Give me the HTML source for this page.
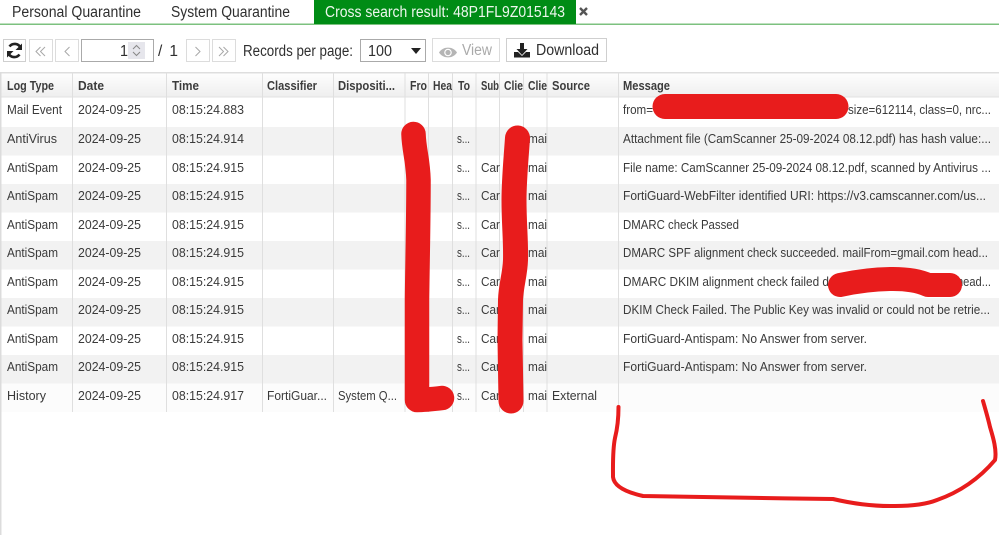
<!DOCTYPE html>
<html><head><meta charset="utf-8"><style>
html,body{margin:0;padding:0;background:#fff;width:999px;height:535px;overflow:hidden}
svg{display:block}
text{font-family:"Liberation Sans",sans-serif;font-size:12.5px;fill:#3a3a3a;white-space:pre}
.b{font-weight:bold;fill:#3c3c3c}
.t{font-size:15.5px;fill:#2f2f2f}
</style></head><body>
<svg width="999" height="535" viewBox="0 0 999 535" xmlns="http://www.w3.org/2000/svg">
<defs><linearGradient id="h" x1="0" y1="0" x2="0" y2="1"><stop offset="0" stop-color="#fff"/><stop offset="1" stop-color="#eeeeee"/></linearGradient></defs>
<rect width="999" height="535" fill="#fff"/>
<!-- tabs -->
<rect x="0" y="23.5" width="999" height="1.5" fill="#7cc17f"/>
<rect x="314" y="0" width="262" height="24" fill="#008c15"/>
<text class="t" x="12" y="17" textLength="129" lengthAdjust="spacingAndGlyphs">Personal Quarantine</text>
<text class="t" x="171" y="17" textLength="119" lengthAdjust="spacingAndGlyphs">System Quarantine</text>
<text class="t" x="325" y="17" textLength="240" lengthAdjust="spacingAndGlyphs" style="fill:#eef7ee">Cross search result: 48P1FL9Z015143</text>
<path d="M580 8l7 7M587 8l-7 7" stroke="#555" stroke-width="2.4"/>
<!-- toolbar -->
<g fill="#fff" stroke="#dcdcdc">
<rect x="3.5" y="39.5" width="22" height="22" stroke="#cfcfcf"/>
<rect x="29.5" y="39.5" width="23" height="22"/>
<rect x="55.5" y="39.5" width="23" height="22"/>
<rect x="186.5" y="39.5" width="23" height="22"/>
<rect x="212.5" y="39.5" width="23" height="22"/>
<rect x="81.5" y="39.5" width="72" height="22" stroke="#aaa"/>
<rect x="360.5" y="39.5" width="65" height="22" stroke="#aaa"/>
<rect x="432.5" y="38.5" width="67" height="23"/>
<rect x="506.5" y="38.5" width="100" height="23" stroke="#cfcfcf"/>
</g>
<path d="M20.500 47.500A6.500 6.500 0 0 0 9.500 46.500M8.500 53.500A6.500 6.500 0 0 0 19.500 54.500" fill="none" stroke="#222" stroke-width="2.6"/>
<path d="M22 43.500v6.500h-6.500zM7 57.500v-6.500h6.500z" fill="#222"/>
<g fill="none" stroke="#a8a8a8" stroke-width="1">
<path d="M40.500 47l-4.500 4.500 4.500 4.500M45 47l-4.500 4.500 4.500 4.500"/>
<path d="M69.500 47l-4.500 4.500 4.500 4.500"/>
<path d="M195.500 47l4.500 4.500-4.500 4.500"/>
<path d="M219 47l4.500 4.500-4.500 4.500M223.500 47l4.500 4.500-4.500 4.500"/>
</g>
<rect x="128" y="42" width="17" height="17" fill="#e6e6ec"/>
<path d="M133 49l3.500-3.500 3.500 3.500M133 52l3.500 3.500 3.500-3.500" fill="none" stroke="#888" stroke-width="1"/>
<text class="t" x="120" y="56" textLength="8" lengthAdjust="spacingAndGlyphs">1</text>
<text class="t" x="158" y="56" textLength="20" lengthAdjust="spacing">/ 1</text>
<text class="t" x="243" y="56" textLength="110" lengthAdjust="spacingAndGlyphs">Records per page:</text>
<text class="t" x="368" y="56" textLength="24" lengthAdjust="spacingAndGlyphs">100</text>
<path d="M411 48h10l-5 6z" fill="#222"/>
<path d="M439 52.500C443 46 453 46 457 52.500C453 59 443 59 439 52.500z" fill="#b5b5b5"/>
<circle cx="448" cy="52.500" r="3.800" fill="#fff"/><circle cx="448" cy="52.500" r="2.600" fill="#b5b5b5"/>
<text class="t" x="462" y="55" textLength="30" lengthAdjust="spacingAndGlyphs" style="fill:#aaa">View</text>
<path d="M520 43h4v6h3.500l-5.500 6-5.500-6h3.500z" fill="#222"/>
<path d="M514 52h4l4 4 4-4h4v5.500h-16z" fill="#222"/>
<text class="t" x="536" y="55" textLength="63" lengthAdjust="spacingAndGlyphs">Download</text>
<!-- table backgrounds -->
<rect x="1" y="72" width="998" height="25" fill="url(#h)"/>
<rect x="1" y="72" width="998" height="1.500" fill="#dedede"/>
<rect x="1" y="96.500" width="998" height="1" fill="#e2e2e2"/>
<g fill="#f2f2f2">
<rect x="1" y="127" width="998" height="28.500"/>
<rect x="1" y="184" width="998" height="28.500"/>
<rect x="1" y="241" width="998" height="28.500"/>
<rect x="1" y="298" width="998" height="28.500"/>
<rect x="1" y="355" width="998" height="28.500"/>
</g>
<rect x="1" y="383.500" width="998" height="28.500" fill="#fcfcfc"/>
<rect x="0" y="72" width="1.500" height="463" fill="#dcdcdc"/>
<g fill="#dfdfdf">
<rect x="72" y="72" width="1" height="340"/><rect x="166" y="72" width="1" height="340"/>
<rect x="262" y="72" width="1" height="340"/><rect x="333" y="72" width="1" height="340"/>
<rect x="404.500" y="72" width="1" height="340"/><rect x="428" y="72" width="1" height="340"/>
<rect x="452" y="72" width="1" height="340"/><rect x="475.500" y="72" width="1" height="340"/>
<rect x="499" y="72" width="1" height="340"/><rect x="523" y="72" width="1" height="340"/>
<rect x="546.500" y="72" width="1" height="340"/><rect x="618" y="72" width="1" height="340"/>
</g>
<!-- header -->
<text class="b" x="7" y="90" textLength="47" lengthAdjust="spacingAndGlyphs">Log Type</text>
<text class="b" x="78" y="90" textLength="26" lengthAdjust="spacingAndGlyphs">Date</text>
<text class="b" x="172" y="90" textLength="27" lengthAdjust="spacingAndGlyphs">Time</text>
<text class="b" x="267" y="90" textLength="50" lengthAdjust="spacingAndGlyphs">Classifier</text>
<text class="b" x="338" y="90" textLength="57" lengthAdjust="spacingAndGlyphs">Dispositi...</text>
<text class="b" x="410" y="90" textLength="17" lengthAdjust="spacingAndGlyphs">Fro</text>
<text class="b" x="433" y="90" textLength="19" lengthAdjust="spacingAndGlyphs">Hea</text>
<text class="b" x="458" y="90" textLength="12" lengthAdjust="spacingAndGlyphs">To</text>
<text class="b" x="481" y="90" textLength="18" lengthAdjust="spacingAndGlyphs">Sub</text>
<text class="b" x="504" y="90" textLength="19" lengthAdjust="spacingAndGlyphs">Clie</text>
<text class="b" x="528" y="90" textLength="19" lengthAdjust="spacingAndGlyphs">Clie</text>
<text class="b" x="552" y="90" textLength="38" lengthAdjust="spacingAndGlyphs">Source</text>
<text class="b" x="623" y="90" textLength="47" lengthAdjust="spacingAndGlyphs">Message</text>
<!-- row 0 -->
<text x="7" y="114" textLength="55" lengthAdjust="spacingAndGlyphs">Mail Event</text>
<text x="78" y="114" textLength="63" lengthAdjust="spacingAndGlyphs">2024-09-25</text>
<text x="172" y="114" textLength="72" lengthAdjust="spacingAndGlyphs">08:15:24.883</text>
<text x="623" y="114" textLength="30" lengthAdjust="spacingAndGlyphs">from=</text>
<text x="848" y="114" textLength="143" lengthAdjust="spacingAndGlyphs">size=612114, class=0, nrc...</text>
<!-- row 1 -->
<text x="7" y="143" textLength="50" lengthAdjust="spacingAndGlyphs">AntiVirus</text>
<text x="78" y="143" textLength="63" lengthAdjust="spacingAndGlyphs">2024-09-25</text>
<text x="172" y="143" textLength="72" lengthAdjust="spacingAndGlyphs">08:15:24.914</text>
<text x="457" y="143" textLength="13" lengthAdjust="spacingAndGlyphs">s...</text>
<text x="528" y="143" textLength="19" lengthAdjust="spacingAndGlyphs">mai</text>
<text x="623" y="143" textLength="368" lengthAdjust="spacingAndGlyphs">Attachment file (CamScanner 25-09-2024 08.12.pdf) has hash value:...</text>
<!-- row 2 -->
<text x="7" y="172" textLength="51" lengthAdjust="spacingAndGlyphs">AntiSpam</text>
<text x="78" y="172" textLength="63" lengthAdjust="spacingAndGlyphs">2024-09-25</text>
<text x="172" y="172" textLength="72" lengthAdjust="spacingAndGlyphs">08:15:24.915</text>
<text x="457" y="172" textLength="13" lengthAdjust="spacingAndGlyphs">s...</text>
<text x="481" y="172" textLength="19" lengthAdjust="spacingAndGlyphs">Car</text>
<text x="528" y="172" textLength="19" lengthAdjust="spacingAndGlyphs">mai</text>
<text x="623" y="172" textLength="368" lengthAdjust="spacingAndGlyphs">File name: CamScanner 25-09-2024 08.12.pdf, scanned by Antivirus ...</text>
<!-- row 3 -->
<text x="7" y="200" textLength="51" lengthAdjust="spacingAndGlyphs">AntiSpam</text>
<text x="78" y="200" textLength="63" lengthAdjust="spacingAndGlyphs">2024-09-25</text>
<text x="172" y="200" textLength="72" lengthAdjust="spacingAndGlyphs">08:15:24.915</text>
<text x="457" y="200" textLength="13" lengthAdjust="spacingAndGlyphs">s...</text>
<text x="481" y="200" textLength="19" lengthAdjust="spacingAndGlyphs">Car</text>
<text x="528" y="200" textLength="19" lengthAdjust="spacingAndGlyphs">mai</text>
<text x="623" y="200" textLength="363" lengthAdjust="spacingAndGlyphs">FortiGuard-WebFilter identified URI: https://v3.camscanner.com/us...</text>
<!-- row 4 -->
<text x="7" y="229" textLength="51" lengthAdjust="spacingAndGlyphs">AntiSpam</text>
<text x="78" y="229" textLength="63" lengthAdjust="spacingAndGlyphs">2024-09-25</text>
<text x="172" y="229" textLength="72" lengthAdjust="spacingAndGlyphs">08:15:24.915</text>
<text x="457" y="229" textLength="13" lengthAdjust="spacingAndGlyphs">s...</text>
<text x="481" y="229" textLength="19" lengthAdjust="spacingAndGlyphs">Car</text>
<text x="528" y="229" textLength="19" lengthAdjust="spacingAndGlyphs">mai</text>
<text x="623" y="229" textLength="116" lengthAdjust="spacingAndGlyphs">DMARC check Passed</text>
<!-- row 5 -->
<text x="7" y="257" textLength="51" lengthAdjust="spacingAndGlyphs">AntiSpam</text>
<text x="78" y="257" textLength="63" lengthAdjust="spacingAndGlyphs">2024-09-25</text>
<text x="172" y="257" textLength="72" lengthAdjust="spacingAndGlyphs">08:15:24.915</text>
<text x="457" y="257" textLength="13" lengthAdjust="spacingAndGlyphs">s...</text>
<text x="481" y="257" textLength="19" lengthAdjust="spacingAndGlyphs">Car</text>
<text x="528" y="257" textLength="19" lengthAdjust="spacingAndGlyphs">mai</text>
<text x="623" y="257" textLength="365" lengthAdjust="spacingAndGlyphs">DMARC SPF alignment check succeeded. mailFrom=gmail.com head...</text>
<!-- row 6 -->
<text x="7" y="286" textLength="51" lengthAdjust="spacingAndGlyphs">AntiSpam</text>
<text x="78" y="286" textLength="63" lengthAdjust="spacingAndGlyphs">2024-09-25</text>
<text x="172" y="286" textLength="72" lengthAdjust="spacingAndGlyphs">08:15:24.915</text>
<text x="457" y="286" textLength="13" lengthAdjust="spacingAndGlyphs">s...</text>
<text x="481" y="286" textLength="19" lengthAdjust="spacingAndGlyphs">Car</text>
<text x="528" y="286" textLength="19" lengthAdjust="spacingAndGlyphs">mai</text>
<text x="623" y="286" textLength="206" lengthAdjust="spacingAndGlyphs">DMARC DKIM alignment check failed d</text>
<text x="957" y="286" textLength="34" lengthAdjust="spacingAndGlyphs">head...</text>
<!-- row 7 -->
<text x="7" y="314" textLength="51" lengthAdjust="spacingAndGlyphs">AntiSpam</text>
<text x="78" y="314" textLength="63" lengthAdjust="spacingAndGlyphs">2024-09-25</text>
<text x="172" y="314" textLength="72" lengthAdjust="spacingAndGlyphs">08:15:24.915</text>
<text x="457" y="314" textLength="13" lengthAdjust="spacingAndGlyphs">s...</text>
<text x="481" y="314" textLength="19" lengthAdjust="spacingAndGlyphs">Car</text>
<text x="528" y="314" textLength="19" lengthAdjust="spacingAndGlyphs">mai</text>
<text x="623" y="314" textLength="367" lengthAdjust="spacingAndGlyphs">DKIM Check Failed. The Public Key was invalid or could not be retrie...</text>
<!-- row 8 -->
<text x="7" y="343" textLength="51" lengthAdjust="spacingAndGlyphs">AntiSpam</text>
<text x="78" y="343" textLength="63" lengthAdjust="spacingAndGlyphs">2024-09-25</text>
<text x="172" y="343" textLength="72" lengthAdjust="spacingAndGlyphs">08:15:24.915</text>
<text x="457" y="343" textLength="13" lengthAdjust="spacingAndGlyphs">s...</text>
<text x="481" y="343" textLength="19" lengthAdjust="spacingAndGlyphs">Car</text>
<text x="528" y="343" textLength="19" lengthAdjust="spacingAndGlyphs">mai</text>
<text x="623" y="343" textLength="244" lengthAdjust="spacingAndGlyphs">FortiGuard-Antispam: No Answer from server.</text>
<!-- row 9 -->
<text x="7" y="371" textLength="51" lengthAdjust="spacingAndGlyphs">AntiSpam</text>
<text x="78" y="371" textLength="63" lengthAdjust="spacingAndGlyphs">2024-09-25</text>
<text x="172" y="371" textLength="72" lengthAdjust="spacingAndGlyphs">08:15:24.915</text>
<text x="457" y="371" textLength="13" lengthAdjust="spacingAndGlyphs">s...</text>
<text x="481" y="371" textLength="19" lengthAdjust="spacingAndGlyphs">Car</text>
<text x="528" y="371" textLength="19" lengthAdjust="spacingAndGlyphs">mai</text>
<text x="623" y="371" textLength="244" lengthAdjust="spacingAndGlyphs">FortiGuard-Antispam: No Answer from server.</text>
<!-- row 10 -->
<text x="7" y="400" textLength="39" lengthAdjust="spacingAndGlyphs">History</text>
<text x="78" y="400" textLength="63" lengthAdjust="spacingAndGlyphs">2024-09-25</text>
<text x="172" y="400" textLength="72" lengthAdjust="spacingAndGlyphs">08:15:24.917</text>
<text x="267" y="400" textLength="60" lengthAdjust="spacingAndGlyphs">FortiGuar...</text>
<text x="338" y="400" textLength="59" lengthAdjust="spacingAndGlyphs">System Q...</text>
<text x="457" y="400" textLength="13" lengthAdjust="spacingAndGlyphs">s...</text>
<text x="481" y="400" textLength="19" lengthAdjust="spacingAndGlyphs">Car</text>
<text x="528" y="400" textLength="19" lengthAdjust="spacingAndGlyphs">mai</text>
<text x="552" y="400" textLength="45" lengthAdjust="spacingAndGlyphs">External</text>
<!-- red marks -->
<g fill="none" stroke="#e81c1c" stroke-linecap="round" stroke-linejoin="round">
<path stroke-width="24.500" d="M413.500 134C414 150 418 160 418.500 180C418.500 220 417.500 260 417 300L417 400Q425 400 442 398"/>
<path stroke-width="25" d="M517.500 138C516 160 514 180 514 200C514 225 516 240 515.500 260C515 275 511 285 510.500 300L510 340L511 401"/>
<path stroke-width="25" d="M665 106.500H836"/>
<path stroke-width="24" d="M840 285Q868 279 893 279Q915 279 928 285L950 285"/>
<path stroke-width="4" d="M618.500 407C618.500 420 617 430 615 438C612.500 450 613 465 613 477C614 486 625 492 643 496C670 497 760 498 833 499C850 503 870 506.500 895 506C915 506 927 504 937 500C957 493 978 480 995 460C997 450 993 437 990 427C988 418 985 408 983 401"/>
</g>
</svg>
</body></html>
